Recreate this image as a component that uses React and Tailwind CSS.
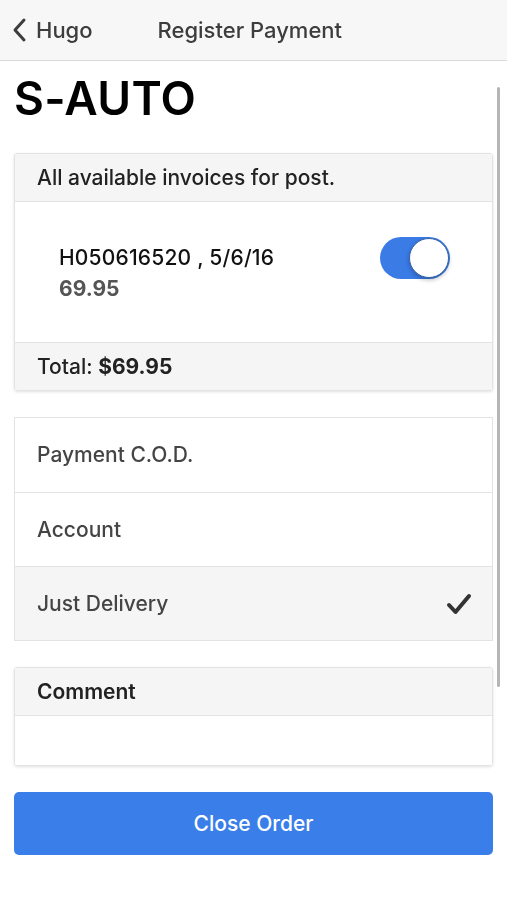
import { useState } from 'react';

const OPCOES = ['Payment C.O.D.', 'Account', 'Just Delivery'];

export default function App() {
  const [ativo, setAtivo] = useState(true);
  const [escolha, setEscolha] = useState('Just Delivery');

  return (
    <div className="relative w-[507px] h-[900px] bg-white overflow-hidden" style={{ fontFamily: 'Inter, "Liberation Sans", sans-serif' }}>
      <div className="h-[61px] bg-[#f7f7f7] border-b border-[#d9d9d9] flex items-center">
        <button className="flex items-center pl-[10px] text-[#3d3d3d]">
          <svg width="20" height="26" viewBox="0 0 20 26" fill="none" stroke="#3d3d3d" strokeWidth="3" strokeLinecap="round" strokeLinejoin="round">
            <path d="M14 3 L5 13 L14 23" />
          </svg>
          <span className="ml-[6px] text-[22px] font-medium">Hugo</span>
        </button>
        <div className="ml-[65px] text-[22px] font-medium text-[#3d3d3d]">Register Payment</div>
      </div>

      {/* scroll indicator */}
      <div className="absolute left-[497px] top-[87px] w-[3px] h-[600px] bg-[#b5b5b5] rounded-full" />

      <div className="px-[14px]">
        <h1 className="text-[46px] font-semibold text-black leading-none pt-[14px] pb-[32px] tracking-[0.3px]">S-AUTO</h1>

        <div className="w-[479px] border border-[#e3e3e3] rounded-[3px] shadow-[0_1px_3px_rgba(0,0,0,0.12)] overflow-hidden">
          <div className="h-[48px] bg-[#f5f5f5] border-b border-[#e3e3e3] flex items-center px-[22px] text-[21px] font-medium text-[#222]">
            All available invoices for post.
          </div>
          <div className="h-[140px] bg-white flex items-start justify-between pl-[44px] pr-[42px] pt-[40px]">
            <div className="leading-[31px]">
              <div className="text-[21px] font-medium text-[#111] tracking-[0.2px]">H050616520 , 5/6/16</div>
              <div className="text-[21px] font-bold text-[#555]">69.95</div>
            </div>
            <button
              onClick={() => setAtivo(!ativo)}
              className={`relative w-[70px] h-[42px] rounded-full mt-[-5px] ${ativo ? 'bg-[#3a7be6]' : 'bg-[#e5e5e5]'}`}
            >
              <span className={`absolute top-[1px] w-[40px] h-[40px] rounded-full bg-white border border-[#3462a8] shadow-[0_2px_4px_rgba(0,0,0,0.25)] ${ativo ? 'left-[29px]' : 'left-[1px]'}`} />
            </button>
          </div>
          <div className="h-[48px] bg-[#f5f5f5] border-t border-[#e3e3e3] flex items-center px-[22px] text-[21px] font-medium text-[#222]">
            Total:&nbsp;<span className="font-bold">$69.95</span>
          </div>
        </div>

        <div className="mt-[26px] w-[479px] border border-[#e3e3e3]">
          {OPCOES.map((op, i) => (
            <div
              key={op}
              onClick={() => setEscolha(op)}
              className={`h-[74px] flex items-center justify-between pl-[22px] pr-[20px] text-[21px] font-medium text-[#444] ${i > 0 ? 'border-t border-[#e3e3e3]' : ''} ${escolha === op ? 'bg-[#f5f5f5]' : 'bg-white'}`}
            >
              <span>{op}</span>
              {escolha === op && (
                <svg width="26" height="24" viewBox="0 0 26 24" fill="none" stroke="#333" strokeWidth="4" strokeLinecap="round" strokeLinejoin="round">
                  <path d="M3 13 L9.5 20 L23 4" />
                </svg>
              )}
            </div>
          ))}
        </div>

        <div className="mt-[26px] w-[479px] border border-[#e3e3e3] rounded-[3px] shadow-[0_1px_3px_rgba(0,0,0,0.12)] overflow-hidden">
          <div className="h-[48px] bg-[#f5f5f5] border-b border-[#e3e3e3] flex items-center px-[22px] text-[21px] font-semibold text-[#222]">
            Comment
          </div>
          <textarea className="block w-full h-[49px] bg-white resize-none outline-none px-[22px] py-[12px] text-[18px]" />
        </div>

        <button className="mt-[26px] w-[479px] h-[63px] rounded-[5px] bg-[#3a7ee9] text-white text-[21px] font-medium">
          Close Order
        </button>
      </div>
    </div>
  );
}
